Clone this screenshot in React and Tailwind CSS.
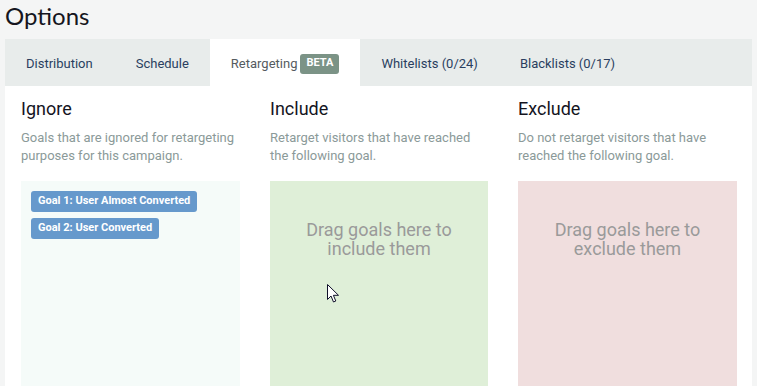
import React from 'react';

const tabs = [
  { label: 'Distribution' },
  { label: 'Schedule' },
  { label: 'Retargeting', active: true, badge: 'BETA' },
  { label: 'Whitelists (0/24)' },
  { label: 'Blacklists (0/17)' },
];

const Column = ({ title, text, zoneClass, children }) => (
  <div className="flex flex-col">
    <h3 className="text-[18px] leading-[22px] text-[#14141e] mt-[12px]">{title}</h3>
    <p className="text-[13px] leading-[18px] text-[#8b9a99] mt-[9px] h-[36px]">{text}</p>
    <div className={`mt-[16px] h-[210px] ${zoneClass}`}>{children}</div>
  </div>
);

const DropHint = ({ children }) => (
  <div className="pt-[39px] text-center text-[18px] leading-[19px] text-[#9a9a9a]">{children}</div>
);

const Cursor = () => (
  <svg className="absolute left-[327px] top-[284px]" width="13" height="20" viewBox="0 0 13 20">
    <path d="M0.5 0.5 L0.5 15.5 L4 12 L6.5 18 L8.8 17 L6.4 11.3 L11.5 11.3 Z" fill="#fff" stroke="#10102a" strokeWidth="1" />
  </svg>
);

export default function App() {
  return (
    <div className="relative w-[757px] h-[386px] overflow-hidden bg-[#f4f5f5]" style={{ fontFamily: 'Roboto, "Noto Sans", sans-serif' }}>
      <h1 className="pl-[5px] pt-[1px] h-[39px] text-[24px] leading-[30px] text-[#151520]" style={{ fontFamily: 'Lato, sans-serif' }}>
        Options
      </h1>
      <div className="ml-[5px] w-[747px] bg-white">
        <div className="flex h-[47px] pt-[2px] bg-[#e8eceb]">
          {tabs.map((t, i) => (
            <div
              key={t.label}
              className={`flex items-center text-[13px] ${i === 0 ? 'pl-[21px] pr-[22px]' : 'px-[21px]'} ${t.active ? 'bg-white text-[#555b60] -mt-[2px] pt-[2px]' : 'text-[#2a3f5f]'}`}
            >
              {t.label}
              {t.badge && (
                <span className="ml-[3px] h-[20px] px-[6px] flex items-center rounded-[3px] bg-[#7b9386] text-white text-[11px] font-bold">
                  {t.badge}
                </span>
              )}
            </div>
          ))}
        </div>
        <div className="grid grid-cols-[219px_218px_219px] gap-x-[30px] pl-[16px] pr-[15px]">
          <Column
            title="Ignore"
            text="Goals that are ignored for retargeting purposes for this campaign."
            zoneClass="bg-[#f5fbf9] p-[10px]"
          >
            <div className="flex flex-col items-start gap-[6px]">
              <span className="h-[21px] px-[7px] flex items-center rounded-[3px] bg-[#6699cc] text-white text-[11px] font-bold">
                Goal 1: User Almost Converted
              </span>
              <span className="h-[21px] px-[7px] flex items-center rounded-[3px] bg-[#6699cc] text-white text-[11px] font-bold">
                Goal 2: User Converted
              </span>
            </div>
          </Column>
          <Column
            title="Include"
            text="Retarget visitors that have reached the following goal."
            zoneClass="bg-[#dfefd8]"
          >
            <DropHint>Drag goals here to<br />include them</DropHint>
          </Column>
          <Column
            title="Exclude"
            text="Do not retarget visitors that have reached the following goal."
            zoneClass="bg-[#f0dede]"
          >
            <DropHint>Drag goals here to<br />exclude them</DropHint>
          </Column>
        </div>
      </div>
      <Cursor />
    </div>
  );
}
